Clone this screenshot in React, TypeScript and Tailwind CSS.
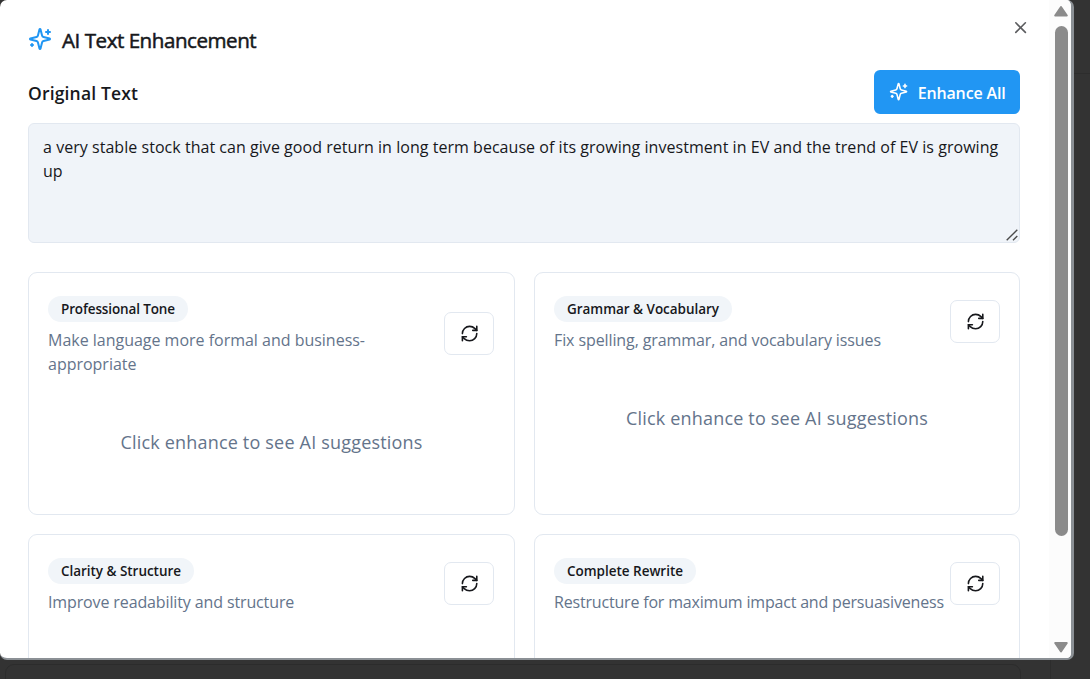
import { RefreshCw, X } from "lucide-react";

function SparklesIcon({ className }: { className: string }) {
  return (
    <svg
      viewBox="0 0 24 24"
      fill="none"
      stroke="currentColor"
      strokeWidth="2"
      strokeLinecap="round"
      strokeLinejoin="round"
      className={className}
    >
      <path d="M9.937 15.5A2 2 0 0 0 8.5 14.063l-6.135-1.582a.5.5 0 0 1 0-.962L8.5 9.936A2 2 0 0 0 9.937 8.5l1.582-6.135a.5.5 0 0 1 .963 0L14.063 8.5A2 2 0 0 0 15.5 9.937l6.135 1.581a.5.5 0 0 1 0 .964L15.5 14.063a2 2 0 0 0-1.437 1.437l-1.582 6.135a.5.5 0 0 1-.963 0z" />
      <path d="M20 3v4" />
      <path d="M22 5h-4" />
      <path d="M4 17v2" />
      <path d="M5 18H3" />
    </svg>
  );
}

interface Enhancement {
  title: string;
  titleClass: string;
  badgeClass: string;
  lines: string[];
  lineClass: string;
  hint?: string;
}

const enhancements: Enhancement[] = [
  {
    title: "Professional Tone",
    titleClass: "tracking-[-0.13px]",
    badgeClass: "w-[140px]",
    lines: ["Make language more formal and business-", "appropriate"],
    lineClass: "tracking-[-0.012px]",
    hint: "Click enhance to see AI suggestions",
  },
  {
    title: "Grammar & Vocabulary",
    titleClass: "tracking-[-0.036px]",
    badgeClass: "w-[178px]",
    lines: ["Fix spelling, grammar, and vocabulary issues"],
    lineClass: "tracking-[-0.1px]",
    hint: "Click enhance to see AI suggestions",
  },
  {
    title: "Clarity & Structure",
    titleClass: "tracking-[-0.038px]",
    badgeClass: "w-[146px]",
    lines: ["Improve readability and structure"],
    lineClass: "tracking-[-0.125px]",
  },
  {
    title: "Complete Rewrite",
    titleClass: "tracking-[-0.024px]",
    badgeClass: "w-[142px]",
    lines: ["Restructure for maximum impact and persuasiveness"],
    lineClass: "tracking-[-0.184px]",
  },
];

function EnhancementCard({ item }: { item: Enhancement }) {
  return (
    <section className="h-[243px] rounded-[9px] border border-[#e2e8f0] px-[19px] pt-[18px]">
      <div className="grid grid-cols-[396px_50px] items-center">
        <div className="pt-[5px]">
          <h3
            className={`flex h-[26px] items-center rounded-full bg-[#f1f5f9] pl-[13px] text-[13.5px] font-semibold whitespace-nowrap ${item.badgeClass} ${item.titleClass}`}
          >
            {item.title}
          </h3>
          <div className={`mt-[6px] text-base leading-6 whitespace-nowrap text-[#64748b] ${item.lineClass}`}>
            {item.lines.map((line) => (
              <p key={line}>{line}</p>
            ))}
          </div>
        </div>
        <button
          aria-label="Enhance"
          className="flex h-[43px] w-[50px] items-center justify-center rounded-[7px] border border-[#e2e8f0] bg-white pl-px"
        >
          <RefreshCw className="size-[19.2px]" />
        </button>
      </div>
      {item.hint && (
        <p className="mt-[52px] text-center text-lg leading-7 tracking-[0.19px] whitespace-nowrap text-[#64748b]">
          {item.hint}
        </p>
      )}
    </section>
  );
}

function Scrollbar() {
  return (
    <div className="flex w-[22px] shrink-0 flex-col items-center bg-[#fcfcfc] pt-[5px] pl-[2px]">
      <svg viewBox="0 0 15 12" className="h-3 w-[15px] shrink-0 fill-[#8b8b8b] stroke-[#8b8b8b]">
        <path d="M7 2 L12.8 10.5 H1.2 Z" strokeWidth="2" strokeLinejoin="round" />
      </svg>
      <div className="mt-[9px] h-[510px] w-[13px] shrink-0 rounded-full bg-[#8b8b8b]" />
      <svg viewBox="0 0 15 12" className="mt-[105px] h-3 w-[15px] shrink-0 fill-[#8b8b8b] stroke-[#8b8b8b]">
        <path d="M7 10.5 L12.8 2 H1.2 Z" strokeWidth="2" strokeLinejoin="round" />
      </svg>
    </div>
  );
}

export default function App() {
  return (
    <div className="relative h-[679px] w-[1090px] overflow-hidden bg-[#333333] font-['Open_Sans',sans-serif] text-[#17181c]">
      <div className="absolute top-[664px] left-[5px] h-10 w-[1016px] rounded-[9px] border border-[#2c2c2c]" />
      <div className="absolute top-[660px] left-[1050px] h-5 w-px bg-[#2d2d2d]" />
      <div className="absolute top-[73px] left-[1073px] h-px w-[17px] bg-[#2d2d2d]" />
      <main className="relative flex h-[660px] w-[1074px] overflow-hidden rounded-[7px] border-r-[3px] border-b-2 border-[#8b9095] bg-white">
        <div className="h-full w-[1049px] shrink-0 overflow-hidden pr-[29px] pl-7">
          <header className="flex h-[70px] items-start justify-between">
            <h1 className="mt-[27px] flex h-6 items-center gap-[10px] text-[20.6px] whitespace-nowrap [-webkit-text-stroke:0.5px_#17181c]">
              <SparklesIcon className="size-6 text-[#2196f3]" />
              <span className="pt-[3px] tracking-[-0.48px]">AI Text Enhancement</span>
            </h1>
            <button aria-label="Close" className="mt-[18px] mr-[-10px] h-[19px]">
              <X className="size-[19.2px] opacity-70" />
            </button>
          </header>
          <div className="flex h-11 items-center justify-between">
            <h2 className="pt-[2px] text-[17.5px] font-semibold tracking-[0.166px]">Original Text</h2>
            <button className="flex h-11 w-[146px] items-center rounded-md bg-[#2196f3] pl-[15px] text-base font-semibold tracking-[-0.152px] text-white">
              <SparklesIcon className="mr-[9.5px] size-[19.2px]" />
              <span className="pt-[2px] whitespace-nowrap">Enhance All</span>
            </button>
          </div>
          <div className="relative mt-[9px] h-[120px] rounded-md border border-[#e2e8f0] bg-[#f0f4f9] px-[14px] pt-[11px] text-base leading-6 tracking-[0.04px]">
            <p className="whitespace-nowrap">
              a very stable stock that can give good return in long term because of its growing investment in EV and the trend of EV is growing
            </p>
            <p>up</p>
            <svg
              viewBox="0 0 12 12"
              className="absolute right-px bottom-px size-3 fill-none stroke-[#4b4b4b]"
              strokeWidth="1.4"
            >
              <path d="M0.7 11.3 L11.3 0.7 M7 11.3 L11.3 7" />
            </svg>
          </div>
          <div className="mt-[29px] grid grid-cols-[487px_486px] gap-x-[19px] gap-y-[19px]">
            {enhancements.map((item) => (
              <EnhancementCard key={item.title} item={item} />
            ))}
          </div>
        </div>
        <Scrollbar />
      </main>
    </div>
  );
}
